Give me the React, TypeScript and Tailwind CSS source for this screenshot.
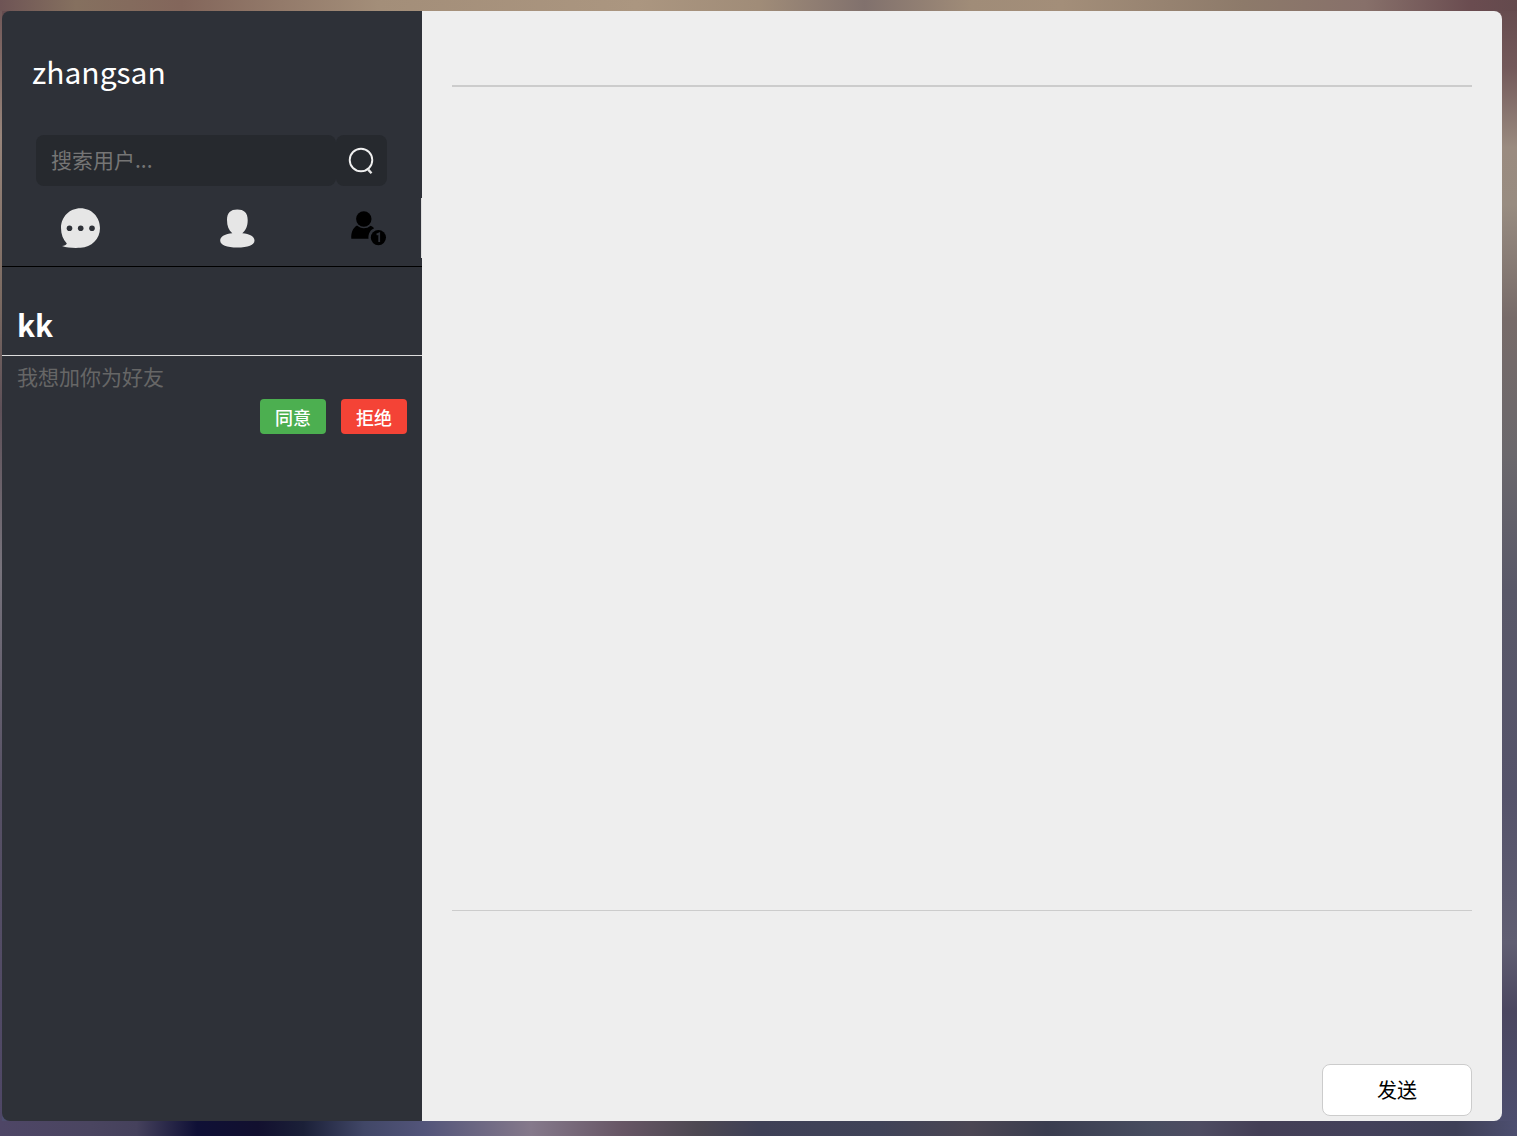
import type { ReactNode } from "react";

type FriendRequest = {
  name: string;
  message: string;
};

const requests: FriendRequest[] = [{ name: "kk", message: "我想加你为好友" }];

function ChatIcon() {
  return (
    <svg width="42" height="42" viewBox="0 0 42 42" aria-hidden="true">
      <path
        d="M20.5 1.3C31.5 1.3 40 10 40 21C40 32 31.5 40.2 20.5 40.8C14 41.2 7 40.8 2 39C4.400 38.800 6.200 38.300 6.800 36.600C3.100 32.500 1 27.500 1 21C1 10 9.500 1.300 20.500 1.300Z"
        fill="#e6e6e6"
      />
      <circle cx="9.5" cy="21.3" r="2.8" fill="#2e3138" />
      <circle cx="20.7" cy="21.3" r="2.8" fill="#2e3138" />
      <circle cx="32" cy="21.3" r="2.8" fill="#2e3138" />
    </svg>
  );
}

function ContactIcon() {
  return (
    <svg width="36" height="40" viewBox="0 0 36 40" aria-hidden="true">
      <path
        d="M17.300 1.400C24 1.400 27.700 4.500 27.700 12C27.700 18 26 22.300 22.300 25.200C29.500 25.700 34.500 28.500 34.500 32.500C34.500 37.200 28 39.500 17.300 39.500C6.800 39.500 0.200 37.200 0.200 32.500C0.200 28.500 5.500 25.700 12.300 25.200C8.700 22.300 7 18 7 12C7 4.500 10.600 1.400 17.300 1.400Z"
        fill="#e6e6e6"
      />
    </svg>
  );
}

function RequestIcon() {
  return (
    <svg width="38" height="38" viewBox="0 0 38 38" aria-hidden="true">
      <circle cx="13.8" cy="10" r="7.7" fill="#000" />
      <path
        d="M7 16.600C9 18.300 11.300 19.200 13.800 19.200C16.400 19.200 18.600 18.400 20.600 16.700C22 17.300 23.200 18.100 24.200 19.200C20.500 20.700 18 24.500 18.500 29.800H1.300C1 24 2.500 19.300 7 16.600Z"
        fill="#000"
      />
      <circle cx="28.4" cy="28.6" r="7.6" fill="#000" />
      <path
        d="M26.600 25.600L29.200 24.400V33"
        fill="none"
        stroke="#2e3138"
        strokeWidth="1.8"
      />
    </svg>
  );
}

function SearchIcon() {
  return (
    <svg width="28" height="28" viewBox="0 0 28 28" aria-hidden="true">
      <circle cx="13" cy="13" r="11.3" fill="none" stroke="#f0f0f0" strokeWidth="1.9" />
      <path d="M20.200 22.600L23.500 26.200" stroke="#e6e6e6" strokeWidth="2.4" />
    </svg>
  );
}

function Tab({ label, children }: { label: string; children: ReactNode }) {
  return (
    <button
      type="button"
      aria-label={label}
      className="flex h-[60px] items-center justify-center last:border-r last:border-[#dddddd]"
    >
      {children}
    </button>
  );
}

function RequestItem({ name, message }: FriendRequest) {
  return (
    <li>
      <h2 className="border-b border-[#dddddd] px-[15px] pt-[35px] pb-[9px] text-[30px] leading-[44px] font-bold text-white">
        {name}
      </h2>
      <p className="px-[15px] pt-[5px] text-[21px] leading-[30px] text-[#666666]">
        {message}
      </p>
      <div className="flex justify-end gap-[15px] px-[15px] pt-2 text-lg font-medium text-white">
        <button type="button" className="h-[35px] rounded bg-[#4caf50] px-[15px]">
          同意
        </button>
        <button type="button" className="h-[35px] rounded bg-[#f44336] px-[15px]">
          拒绝
        </button>
      </div>
    </li>
  );
}

function Sidebar() {
  return (
    <aside className="w-[420px] shrink-0 bg-[#2e3138]">
      <h1 className="px-[30px] pt-[38px] text-[30px] leading-[44px] text-white">
        zhangsan
      </h1>
      <form className="mx-[34px] mt-[42px] flex h-[51px]">
        <input
          type="text"
          aria-label="搜索用户"
          placeholder="搜索用户..."
          className="w-[300px] rounded-lg bg-[#26292e] px-[15px] pb-0.5 text-[21px] text-white outline-none placeholder:text-[#757575]"
        />
        <button
          type="button"
          aria-label="搜索"
          className="flex w-[51px] items-center justify-center rounded-lg bg-[#26292e]"
        >
          <SearchIcon />
        </button>
      </form>
      <nav className="mt-3 grid grid-cols-[3fr_3fr_2fr] border-b border-black pb-2">
        <Tab label="聊天">
          <ChatIcon />
        </Tab>
        <Tab label="联系人">
          <ContactIcon />
        </Tab>
        <Tab label="好友请求">
          <RequestIcon />
        </Tab>
      </nav>
      <ul>
        {requests.map((request) => (
          <RequestItem key={request.name} {...request} />
        ))}
      </ul>
    </aside>
  );
}

function ChatPanel() {
  return (
    <main className="flex min-w-0 flex-1 flex-col bg-[#eeeeee] px-[30px] pb-[5px]">
      <header className="h-[76px] border-b-2 border-[#cccccc]" />
      <section className="flex-1" />
      <form className="flex flex-col border-t border-[#cccccc]">
        <textarea
          aria-label="消息"
          className="h-[153px] w-full resize-none bg-transparent text-xl outline-none"
        />
        <button
          type="button"
          className="h-[52px] w-[150px] self-end rounded-lg border border-[#cccccc] bg-white text-xl text-black"
        >
          发送
        </button>
      </form>
    </main>
  );
}

// Blurred wallpaper: one gradient strip for each side of the window
const wallpaper = [
  "bg-[linear-gradient(90deg,#6e5455_0%,#85705f_5%,#83665b_12%,#a38e79_25%,#ab9680_42%,#a08c78_50%,#81716d_57%,#a08c78_64%,#a38e79_70%,#8d7a6a_82%,#87706a_90%,#6a4c50_97%,#644a4d_100%),linear-gradient(90deg,#4e4666_0%,#4a4560_6%,#45415c_9%,#0f1036_13%,#12102f_17%,#1b2038_20%,#414767_24%,#53557a_28%,#85798b_35%,#675665_41%,#4d4852_46%,#3e4056_50%,#404358_58%,#4b4653_64%,#3a3d4f_69%,#484d60_76%,#4e4c62_79%,#443f56_83%,#43415a_90%,#3e4057_96%,#4d4f70_100%),linear-gradient(180deg,#6e5455_0%,#98857b_12%,#7c6b62_26%,#5e5058_36%,#77737c_50%,#565064_70%,#4e4666_100%),linear-gradient(180deg,#644a4d_0%,#73595a_6%,#9a8b80_13%,#988c81_18%,#776b69_28%,#6b686c_40%,#595868_52%,#55536a_70%,#605e72_83%,#4b4760_89%,#4d4f70_100%)]",
  "bg-[size:100%_11px,100%_15px,2px_100%,100%_100%]",
  "bg-[position:top,bottom,left,right]",
  "bg-no-repeat",
].join(" ");

export default function App() {
  return (
    <div
      className={`flex min-h-screen pt-[11px] pr-[15px] pb-[15px] pl-[2px] font-["Noto_Sans_CJK_SC",sans-serif] ${wallpaper}`}
    >
      <div className="flex min-w-0 flex-1 overflow-hidden rounded-lg">
        <Sidebar />
        <ChatPanel />
      </div>
    </div>
  );
}
